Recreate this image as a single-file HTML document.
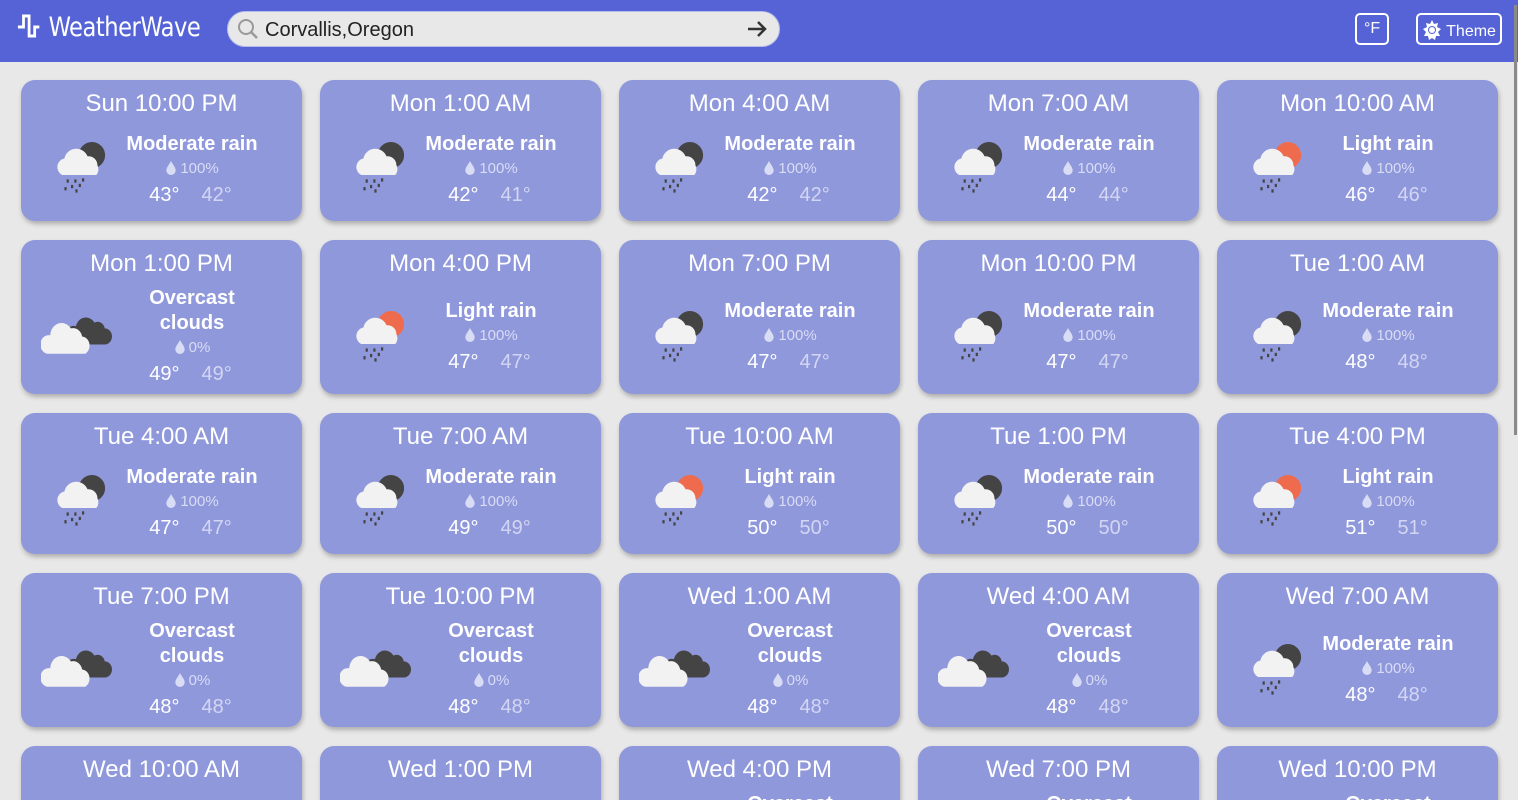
<!DOCTYPE html>
<html><head><meta charset="utf-8"><style>
*{box-sizing:border-box;margin:0;padding:0}
html,body{width:1518px;height:800px;overflow:hidden}
body{background:#e8e8e8;font-family:"Liberation Sans",Roboto,sans-serif;position:relative}
.hdr{position:absolute;left:0;top:0;width:1518px;height:62px;background:#5563d6}
.logo{position:absolute;left:17px;top:12px;color:#fff;font-size:27px;font-family:"DejaVu Sans Condensed","Liberation Sans Narrow","Liberation Sans",sans-serif;letter-spacing:-0.5px;transform:scaleX(.93);transform-origin:left}
.search{position:absolute;left:227px;top:11px;width:553px;height:36px;background:#e8e8e8;border-radius:18px;border:1px solid #b8bce8}
.search span{position:absolute;left:37px;top:7px;font-size:20px;color:#222}
.btn{position:absolute;top:13px;height:32px;border:2px solid #fff;border-radius:5px;color:#fff;font-size:16px}
.sb{position:absolute;left:1514px;top:5px;width:3px;height:430px;background:#8a8a8a}
.card{position:absolute;width:281px;border-radius:14px;background:#9098dc;box-shadow:1px 3px 5px rgba(0,0,0,.25);color:#fff;overflow:hidden}
.t{position:absolute;left:0;width:100%;top:10px;text-align:center;font-size:24px}
.tx{position:absolute;left:101px;width:140px;text-align:center}
.d{font-size:20px;font-weight:bold;line-height:25px}
.p{font-size:15px;color:#d8dcf5;line-height:24px}
.p svg{vertical-align:-2px;margin-right:3px}
.tm{font-size:20px;line-height:28px;margin-left:-3px}
.tm b{font-weight:normal;color:#d3d6f3;margin-left:22px}
.ic{position:absolute}
</style></head><body>
<svg width="0" height="0" style="position:absolute">
<defs>
<symbol id="rd" viewBox="0 0 60 60"><circle cx="39" cy="22" r="12" fill="#444"/><path d="M12 40a8 8 0 0 1 2-15 11 11 0 0 1 21-2 8 8 0 0 1 9 8 8 8 0 0 1-1 9z" fill="#f2f2f2"/><g fill="#444"><rect x="16" y="44" width="2" height="3"/><rect x="23" y="44" width="2" height="3"/><rect x="30" y="43" width="2" height="3"/><rect x="20" y="49" width="2" height="3"/><rect x="27" y="48" width="2" height="3"/><rect x="14" y="51" width="2" height="3"/><rect x="24" y="53" width="2" height="3"/></g></symbol>
<symbol id="rl" viewBox="0 0 60 60"><circle cx="39" cy="22" r="12" fill="#ee6c4d"/><path d="M12 40a8 8 0 0 1 2-15 11 11 0 0 1 21-2 8 8 0 0 1 9 8 8 8 0 0 1-1 9z" fill="#f2f2f2"/><g fill="#444"><rect x="16" y="44" width="2" height="3"/><rect x="23" y="44" width="2" height="3"/><rect x="30" y="43" width="2" height="3"/><rect x="20" y="49" width="2" height="3"/><rect x="27" y="48" width="2" height="3"/><rect x="14" y="51" width="2" height="3"/><rect x="24" y="53" width="2" height="3"/></g></symbol>
<symbol id="oc" viewBox="0 0 70 40"><path d="M30 30a8 8 0 0 1 4-16 10 10 0 0 1 18-3 7 7 0 0 1 10 5 7 7 0 0 1 0 14z" fill="#444"/><path d="M6 38a8 8 0 0 1 3-16 11 11 0 0 1 20-6 9 9 0 0 1 11 7 8 8 0 0 1 3 15z" fill="#f2f2f2"/></symbol>
<symbol id="dr" viewBox="0 0 12 16"><path d="M6 1C4 5 1 8 1 11a5 5 0 0 0 10 0C11 8 8 5 6 1z" fill="#d8dcf5"/></symbol>
</defs></svg>
<div class="hdr">
<div class="logo"><svg width="34" height="26" viewBox="0 0 34 26" style="vertical-align:-3px"><path d="M1 14h6V3h6v20h6V14h5" fill="none" stroke="#fff" stroke-width="3"/></svg>WeatherWave</div>
<div class="search"><svg width="24" height="24" viewBox="0 0 24 24" style="position:absolute;left:8px;top:5px"><circle cx="10" cy="10" r="7" fill="none" stroke="#999" stroke-width="2"/><path d="M15 15l6 6" stroke="#999" stroke-width="2.5"/></svg><span>Corvallis,Oregon</span><svg width="22" height="22" viewBox="0 0 22 22" style="position:absolute;left:518px;top:6px"><path d="M2 11h17M12 4l7 7-7 7" fill="none" stroke="#333" stroke-width="2.5"/></svg></div>
<div class="btn" style="left:1355px;width:34px;padding:5px 0 0 7px">°F</div>
<div class="btn" style="left:1416px;width:86px;padding:5px 0 0 4px"><svg width="20" height="20" viewBox="0 0 20 20" style="vertical-align:-4px"><path d="M10 0l2 4 4-1-1 4 4 2-3 3 2 4-4 0-1 4-3-2-3 2-1-4-4 0 2-4-3-3 4-2-1-4 4 1z" fill="#fff"/><circle cx="10" cy="10" r="4" fill="#5563d6"/><circle cx="10" cy="10" r="3" fill="#fff"/></svg> Theme</div>
</div>
<div class="sb"></div>
<div id="g"></div>
<script>
const D=[
["Sun 10:00 PM","m","100%",43,42],["Mon 1:00 AM","m","100%",42,41],["Mon 4:00 AM","m","100%",42,42],["Mon 7:00 AM","m","100%",44,44],["Mon 10:00 AM","l","100%",46,46],
["Mon 1:00 PM","o","0%",49,49],["Mon 4:00 PM","l","100%",47,47],["Mon 7:00 PM","m","100%",47,47],["Mon 10:00 PM","m","100%",47,47],["Tue 1:00 AM","m","100%",48,48],
["Tue 4:00 AM","m","100%",47,47],["Tue 7:00 AM","m","100%",49,49],["Tue 10:00 AM","l","100%",50,50],["Tue 1:00 PM","m","100%",50,50],["Tue 4:00 PM","l","100%",51,51],
["Tue 7:00 PM","o","0%",48,48],["Tue 10:00 PM","o","0%",48,48],["Wed 1:00 AM","o","0%",48,48],["Wed 4:00 AM","o","0%",48,48],["Wed 7:00 AM","m","100%",48,48],
["Wed 10:00 AM","l","100%",48,48],["Wed 1:00 PM","l","100%",48,48],["Wed 4:00 PM","o","0%",48,48],["Wed 7:00 PM","o","0%",48,48],["Wed 10:00 PM","o","0%",48,48]];
const rows=[[80,141],[240,154],[413,141],[573,154],[746,154]];
let h="";
D.forEach((c,i)=>{const r=Math.floor(i/5),x=21+299*(i%5),[y,ht]=rows[r];
const tall=ht>150, o=c[1]=="o";
const desc=o?"Overcast<br>clouds":(c[1]=="m"?"Moderate rain":"Light rain");
const top=o?(tall?46:40):(tall?59:52);
const icon=o?`<svg class="ic" style="left:20px;top:${tall?70:56}px" width="72" height="46" viewBox="0 0 70 40" preserveAspectRatio="none"><use href="#oc"/></svg>`:
`<svg class="ic" style="left:28px;top:${tall?60:51}px" width="66" height="66"><use href="#${c[1]=="m"?"rd":"rl"}"/></svg>`;
h+=`<div class="card" style="left:${x}px;top:${y}px;height:${ht}px"><div class="t">${c[0]}</div>${icon}<div class="tx" style="top:${top}px"><div class="d">${desc}</div><div class="p"><svg width="12" height="15"><use href="#dr"/></svg>${c[2]}</div><div class="tm">${c[3]}°<b>${c[4]}°</b></div></div></div>`;});
document.getElementById("g").innerHTML=h;
</script>
</body></html>
